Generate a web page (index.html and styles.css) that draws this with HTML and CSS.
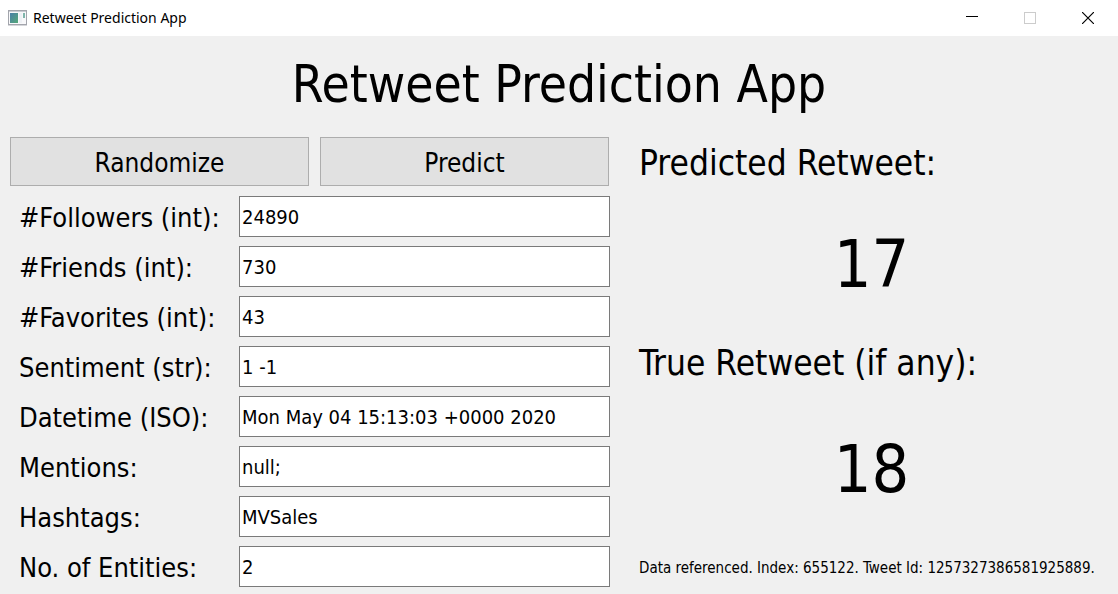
FILE: index.html
```html
<!DOCTYPE html>
<html lang="en">
<head>
<meta charset="utf-8">
<meta name="viewport" content="width=device-width, initial-scale=1">
<title>Retweet Prediction App</title>
<link rel="stylesheet" href="styles.css">
</head>
<body>
<header class="titlebar">
  <svg class="app-icon" width="19" height="16" viewBox="0 0 19 16" aria-hidden="true">
    <defs><linearGradient id="pane" x1="0" y1="0" x2="1" y2="1"><stop offset="0" stop-color="#4a7fa8"/><stop offset="1" stop-color="#55a878"/></linearGradient></defs>
    <rect x="0.5" y="0.5" width="18" height="14" fill="#f8f8fa" stroke="#a3a5ac"/>
    <path d="M1 1.5h17" stroke="#c9cbd2"/>
    <rect x="2" y="3" width="8" height="10" fill="url(#pane)"/>
    <rect x="11" y="3" width="3" height="10" fill="#eef1f5"/>
    <rect x="15" y="3" width="2" height="5" fill="#7fb5ab"/>
    <path d="M0 15.5h19" stroke="#d5d6da"/>
  </svg>
  <span class="window-title">Retweet Prediction App</span>
  <div class="window-controls">
    <button class="window-button" type="button" aria-label="Minimize"><svg width="12" height="12" viewBox="0 0 12 12"><path d="M0 4.5h12" stroke="#000"/></svg></button>
    <button class="window-button" type="button" aria-label="Maximize" disabled><svg width="12" height="12" viewBox="0 0 12 12"><rect x="0.5" y="0.5" width="11" height="11" fill="none" stroke="#ccc"/></svg></button>
    <button class="window-button" type="button" aria-label="Close"><svg width="12" height="12" viewBox="0 0 12 12"><path d="M0 0l12 12M12 0L0 12" stroke="#000" stroke-width="1.2"/></svg></button>
  </div>
</header>
<main class="app">
  <h1 class="heading">Retweet Prediction App</h1>
  <div class="panels">
    <form class="form">
      <div class="actions">
        <button class="action" type="button">Randomize</button>
        <button class="action" type="button">Predict</button>
      </div>
      <div class="fields">
        <label class="label" for="followers">#Followers (int):</label><input class="input" id="followers" type="text" value="24890">
        <label class="label" for="friends">#Friends (int):</label><input class="input" id="friends" type="text" value="730">
        <label class="label" for="favorites">#Favorites (int):</label><input class="input" id="favorites" type="text" value="43">
        <label class="label" for="sentiment">Sentiment (str):</label><input class="input" id="sentiment" type="text" value="1 -1">
        <label class="label" for="datetime">Datetime (ISO):</label><input class="input" id="datetime" type="text" value="Mon May 04 15:13:03 +0000 2020">
        <label class="label" for="mentions">Mentions:</label><input class="input" id="mentions" type="text" value="null;">
        <label class="label" for="hashtags">Hashtags:</label><input class="input" id="hashtags" type="text" value="MVSales">
        <label class="label" for="entities">No. of Entities:</label><input class="input" id="entities" type="text" value="2">
      </div>
    </form>
    <section class="results">
      <h2 class="result-title">Predicted Retweet:</h2>
      <output class="result-value">17</output>
      <h2 class="result-title">True Retweet (if any):</h2>
      <output class="result-value result-value-true">18</output>
      <p class="note">Data referenced. Index: 655122. Tweet Id: 1257327386581925889.</p>
    </section>
  </div>
</main>
</body>
</html>
```
FILE: styles.css
```css
* { box-sizing: border-box; }

body {
  margin: 0;
  background: #f0f0f0;
  color: #000;
  font-family: Tahoma, "DejaVu Sans Condensed", "Noto Sans", sans-serif;
}

.titlebar {
  display: flex;
  align-items: center;
  height: 36px;
  padding-left: 8px;
  gap: 6px;
  background: #fff;
}

.window-title {
  font: 14px/20px "Noto Sans", sans-serif;
}

.window-controls {
  display: flex;
  align-self: stretch;
  margin-left: auto;
  padding-right: 1px;
}

.window-button {
  display: grid;
  place-items: center;
  width: 58px;
  padding: 0;
  border: 0;
  background: none;
}

.heading {
  margin: 0;
  padding: 9px 0 12px;
  font-size: 51px;
  font-weight: 400;
  line-height: 80px;
  text-align: center;
}

.panels {
  display: grid;
  grid-template-columns: 600fr 470fr;
  column-gap: 29px;
  padding: 0 9px 7px 10px;
}

.actions {
  display: grid;
  grid-template-columns: 299fr 289fr;
  gap: 11px;
  padding-right: 1px;
  margin-bottom: 10px;
}

.action {
  height: 49px;
  padding: 2px 0 0;
  border: 1px solid #adadad;
  background: #e1e1e1;
  color: #000;
  font-family: inherit;
  font-size: 26px;
}

.fields {
  display: grid;
  grid-template-columns: 220px 1fr;
  gap: 9px;
  align-items: center;
}

.label {
  padding: 2px 0 0 9px;
  font-size: 27px;
  line-height: 39px;
  white-space: nowrap;
}

.input {
  width: 100%;
  min-width: 0;
  height: 41px;
  padding: 2px;
  border: 1px solid #7a7a7a;
  border-radius: 0;
  background: #fff;
  color: #000;
  font-family: inherit;
  font-size: 20px;
}

.results {
  display: flex;
  flex-direction: column;
  padding-right: 5px;
}

.result-title {
  margin: 0;
  font-size: 35px;
  font-weight: 400;
  line-height: 53px;
}

.result-value {
  padding-top: 2px;
  font-size: 66px;
  line-height: 145px;
  text-align: center;
}

.result-value-true {
  padding-top: 7px;
}

.note {
  margin: auto 0 0;
  font-size: 15px;
  line-height: 38px;
  white-space: nowrap;
}
```
